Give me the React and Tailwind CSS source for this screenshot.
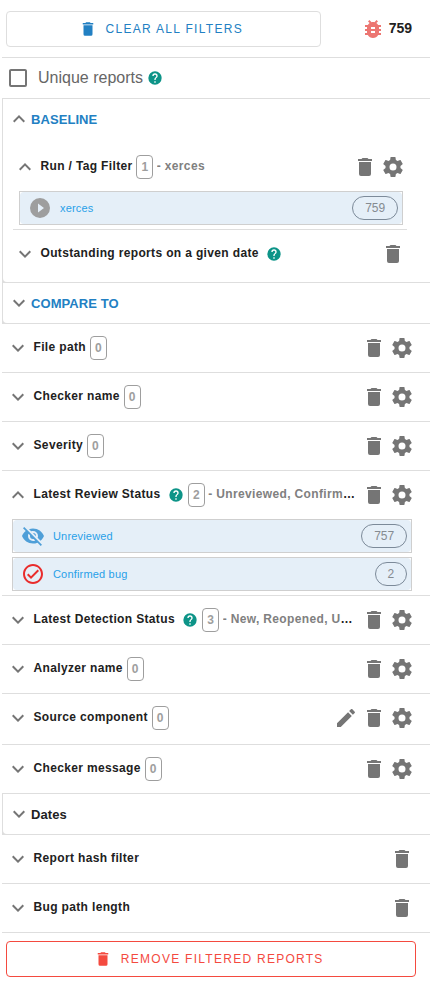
import React from "react";

const ICONS = {
  trash: "M19,4H15.5L14.5,3H9.5L8.5,4H5V6H19M6,19A2,2 0 0,0 8,21H16A2,2 0 0,0 18,19V7H6V19Z",
  cog: "M12,15.5A3.5,3.5 0 0,1 8.5,12A3.5,3.5 0 0,1 12,8.5A3.5,3.5 0 0,1 15.5,12A3.5,3.5 0 0,1 12,15.5M19.43,12.97C19.47,12.65 19.5,12.33 19.5,12C19.5,11.67 19.47,11.34 19.43,11L21.54,9.37C21.73,9.22 21.78,8.95 21.66,8.73L19.66,5.27C19.54,5.05 19.27,4.96 19.05,5.05L16.56,6.05C16.04,5.66 15.5,5.32 14.87,5.07L14.5,2.42C14.46,2.18 14.25,2 14,2H10C9.75,2 9.54,2.18 9.5,2.42L9.13,5.07C8.5,5.32 7.96,5.66 7.44,6.05L4.95,5.05C4.73,4.96 4.46,5.05 4.34,5.27L2.34,8.73C2.21,8.95 2.27,9.22 2.46,9.37L4.57,11C4.53,11.34 4.5,11.67 4.5,12C4.5,12.33 4.53,12.65 4.57,12.97L2.46,14.63C2.27,14.78 2.21,15.05 2.34,15.27L4.34,18.73C4.46,18.95 4.73,19.03 4.95,18.95L7.44,17.94C7.96,18.34 8.5,18.68 9.13,18.93L9.5,21.58C9.54,21.82 9.75,22 10,22H14C14.25,22 14.46,21.82 14.5,21.58L14.87,18.93C15.5,18.67 16.04,18.34 16.56,17.94L19.05,18.95C19.27,19.03 19.54,18.95 19.66,18.73L21.66,15.27C21.78,15.05 21.73,14.78 21.54,14.63L19.43,12.97Z",
  bug: "M14,12H10V10H14M14,16H10V14H14M20,8H17.19C16.74,7.22 16.12,6.55 15.37,6.04L17,4.41L15.59,3L13.42,5.17C12.96,5.06 12.5,5 12,5C11.5,5 11.04,5.06 10.59,5.17L8.41,3L7,4.41L8.62,6.04C7.88,6.55 7.26,7.22 6.81,8H4V10H6.09C6.04,10.33 6,10.66 6,11V12H4V14H6V15C6,15.34 6.04,15.67 6.09,16H4V18H6.81C7.85,19.79 9.78,21 12,21C14.22,21 16.15,19.79 17.19,18H20V16H17.91C17.96,15.67 18,15.34 18,15V14H20V12H18V11C18,10.66 17.96,10.33 17.91,10H20V8Z",
  help: "M15.07,11.25L14.17,12.17C13.45,12.89 13,13.5 13,15H11V14.5C11,13.39 11.45,12.39 12.17,11.67L13.41,10.41C13.78,10.05 14,9.55 14,9C14,7.89 13.1,7 12,7A2,2 0 0,0 10,9H8A4,4 0 0,1 12,5A4,4 0 0,1 16,9C16,9.88 15.64,10.67 15.07,11.25M13,19H11V17H13M12,2A10,10 0 0,0 2,12A10,10 0 0,0 12,22A10,10 0 0,0 22,12C22,6.47 17.5,2 12,2Z",
  pencil: "M20.71,7.04C21.1,6.65 21.1,6 20.71,5.63L18.37,3.29C18,2.9 17.35,2.9 16.96,3.29L15.12,5.12L18.87,8.87M3,17.25V21H6.75L17.81,9.93L14.06,6.18L3,17.25Z",
  eyeOff: "M11.83,9L15,12.16C15,12.11 15,12.05 15,12A3,3 0 0,0 12,9C11.94,9 11.89,9 11.83,9M7.53,9.8L9.08,11.35C9.03,11.56 9,11.77 9,12A3,3 0 0,0 12,15C12.22,15 12.44,14.97 12.65,14.92L14.2,16.47C13.53,16.8 12.79,17 12,17A5,5 0 0,1 7,12C7,11.21 7.2,10.47 7.53,9.8M2,4.27L4.28,6.55L4.73,7C3.08,8.3 1.78,10 1,12C2.73,16.39 7,19.5 12,19.5C13.55,19.5 15.03,19.2 16.38,18.66L16.81,19.08L19.73,22L21,20.73L3.27,3M12,7A5,5 0 0,1 17,12C17,12.64 16.87,13.26 16.64,13.82L19.57,16.75C21.07,15.5 22.27,13.86 23,12C21.27,7.61 17,4.5 12,4.5C10.6,4.5 9.26,4.75 8,5.2L10.17,7.35C10.74,7.13 11.35,7 12,7Z",
  play: "M10,16.5V7.5L16,12M12,2A10,10 0 0,0 2,12A10,10 0 0,0 12,22A10,10 0 0,0 22,12A10,10 0 0,0 12,2Z",
  check: "M12 2C6.5 2 2 6.5 2 12S6.5 22 12 22 22 17.5 22 12 17.5 2 12 2M12 20C7.59 20 4 16.41 4 12S7.59 4 12 4 20 7.59 20 12 16.41 20 12 20M16.59 7.58L10 14.17L7.41 11.59L6 13L10 17L18 9L16.59 7.58Z",
  box: "M19,3H5C3.89,3 3,3.89 3,5V19A2,2 0 0,0 5,21H19A2,2 0 0,0 21,19V5C21,3.89 20.1,3 19,3M19,5V19H5V5H19Z",
  down: "M7.41,8.58L12,13.17L16.59,8.58L18,10L12,16L6,10L7.41,8.58Z",
  up: "M7.41,15.41L12,10.83L16.59,15.41L18,14L12,8L6,14L7.41,15.41Z",
};

function Icon({ name, className = "size-6 text-[#757575]" }) {
  return (
    <svg viewBox="0 0 24 24" fill="currentColor" className={"shrink-0 " + className}>
      <path d={ICONS[name]} />
    </svg>
  );
}

function Help({ className = "" }) {
  return <Icon name="help" className={"size-4 text-[#0d9488] " + className} />;
}

function FilterHeader({ title, open, help, count, selected, actions }) {
  return (
    <div className="flex h-12 items-center">
      <Icon name={open ? "up" : "down"} />
      <div className="ml-[3.5px] flex min-w-0 flex-1 items-center text-xs font-bold tracking-[0.35px] text-[#212121]">
        <span className="shrink-0 -translate-y-px">{title}</span>
        {help && <Help className="ml-[7.5px]" />}
        {count !== undefined && (
          <span className="ml-[3.9px] flex h-6 shrink-0 items-center rounded border border-[#9e9e9e] px-1 text-[#9e9e9e]">
            {count}
          </span>
        )}
        {selected && (
          <span className="ml-[3.3px] min-w-0 -translate-y-px truncate">
            <span className="text-[#808080]">- {selected}</span>
          </span>
        )}
      </div>
      <div className="-mr-[0.4px] ml-1.5 flex shrink-0 gap-1">
        {actions.map((a) => (
          <Icon key={a} name={a} />
        ))}
      </div>
    </div>
  );
}

function Item({ icon, color, label, count }) {
  return (
    <div className="h-[34px] border border-[#cfcfcf]">
      <div className="flex h-full items-center rounded bg-[#e5eff8] pr-1 pl-2">
        <Icon name={icon} className={"size-6 " + color} />
        <span className="ml-2 flex-1 text-[11px] tracking-[0.18px] text-[#28a0e8]">{label}</span>
        <span className="flex h-6 items-center rounded-full border border-[#7c8a99] px-[11.8px] text-xs text-[#858b91]">
          {count}
        </span>
      </div>
    </div>
  );
}

function Filter({ items, tall, ...header }) {
  return (
    <div className={"border-b border-[#dedede] pr-4 pl-1 " + (tall ? "pb-0.5" : "")}>
      <FilterHeader {...header} />
      {items && (
        <div className="mr-0.5 ml-1.5 flex flex-col gap-1 pb-1">
          {items.map((i) => (
            <Item key={i.label} {...i} />
          ))}
        </div>
      )}
    </div>
  );
}

function Section({ title, open, color, children }) {
  return (
    <div className="border-b border-l border-[#dedede] bg-[#dedede]">
      <div className="rounded-bl bg-white pl-1">
        <div className={"flex h-10 items-center text-[13px] font-bold tracking-[0.07px] " + color}>
          <Icon name={open ? "up" : "down"} />
          <span className="translate-y-px">{title}</span>
        </div>
        {children}
      </div>
    </div>
  );
}

const BOTH = ["trash", "cog"];

export default function App() {
  return (
    <div className="h-[981px] w-[430px] overflow-hidden bg-white pl-0.5 font-['Liberation_Sans',Arial,sans-serif]">
      <div className="flex h-[58px] items-center border-b border-[#dedede] pr-[18px] pl-1">
        <button className="flex h-9 w-[315px] items-center justify-center rounded border border-[#dedede] text-xs tracking-[1.3px] text-[#2280c3]">
          <Icon name="trash" className="mr-[8.5px] -ml-[5px] size-[18px]" />
          CLEAR ALL FILTERS
        </button>
        <div className="ml-auto flex items-center gap-1 text-sm font-bold text-[#212121]">
          <Icon name="bug" className="size-6 text-[#ec7672]" />
          <span className="-translate-y-px">759</span>
        </div>
      </div>

      <div className="flex h-[41px] items-center border-b border-[#dedede] pl-1 text-base text-[#666666]">
        <Icon name="box" />
        <span className="ml-2">Unique reports</span>
        <Help className="ml-1" />
      </div>

      <Section title="BASELINE" open color="text-[#2280c3]">
        <div className="mr-[25px] ml-1.5 pt-1 pb-1">
          <div className="-mr-0.5 border-b border-[#dedede] pr-0.5 pb-1">
            <FilterHeader title="Run / Tag Filter" open count={1} selected="xerces" actions={BOTH} />
            <div className="mr-0.5 ml-1.5">
              <Item icon="play" color="text-[#9e9e9e]" label="xerces" count={759} />
            </div>
          </div>
          <FilterHeader title="Outstanding reports on a given date" help actions={["trash"]} />
        </div>
      </Section>
      <Section title="COMPARE TO" color="text-[#2280c3]" />

      <Filter title="File path" count={0} actions={BOTH} />
      <Filter title="Checker name" count={0} actions={BOTH} />
      <Filter title="Severity" count={0} actions={BOTH} />
      <Filter
        title="Latest Review Status"
        open
        help
        count={2}
        selected="Unreviewed, Confirmed bug"
        actions={BOTH}
        items={[
          { icon: "eyeOff", color: "text-[#4f9fd8]", label: "Unreviewed", count: 757 },
          { icon: "check", color: "text-[#e92c2c]", label: "Confirmed bug", count: 2 },
        ]}
      />
      <Filter title="Latest Detection Status" help count={3} selected="New, Reopened, Unresolved" actions={BOTH} />
      <Filter title="Analyzer name" count={0} actions={BOTH} />
      <Filter title="Source component" count={0} tall actions={["pencil", "trash", "cog"]} />
      <Filter title="Checker message" count={0} actions={BOTH} />
      <Section title="Dates" color="text-[#212121]" />
      <Filter title="Report hash filter" actions={["trash"]} />
      <Filter title="Bug path length" actions={["trash"]} />

      <div className="pt-2 pr-3.5 pl-1">
        <button className="flex h-9 w-full items-center justify-center rounded border border-[#f44a3f] text-xs tracking-[1.27px] text-[#f44a3f]">
          <Icon name="trash" className="mr-[8.5px] -ml-1 size-[18px]" />
          REMOVE FILTERED REPORTS
        </button>
      </div>
    </div>
  );
}
